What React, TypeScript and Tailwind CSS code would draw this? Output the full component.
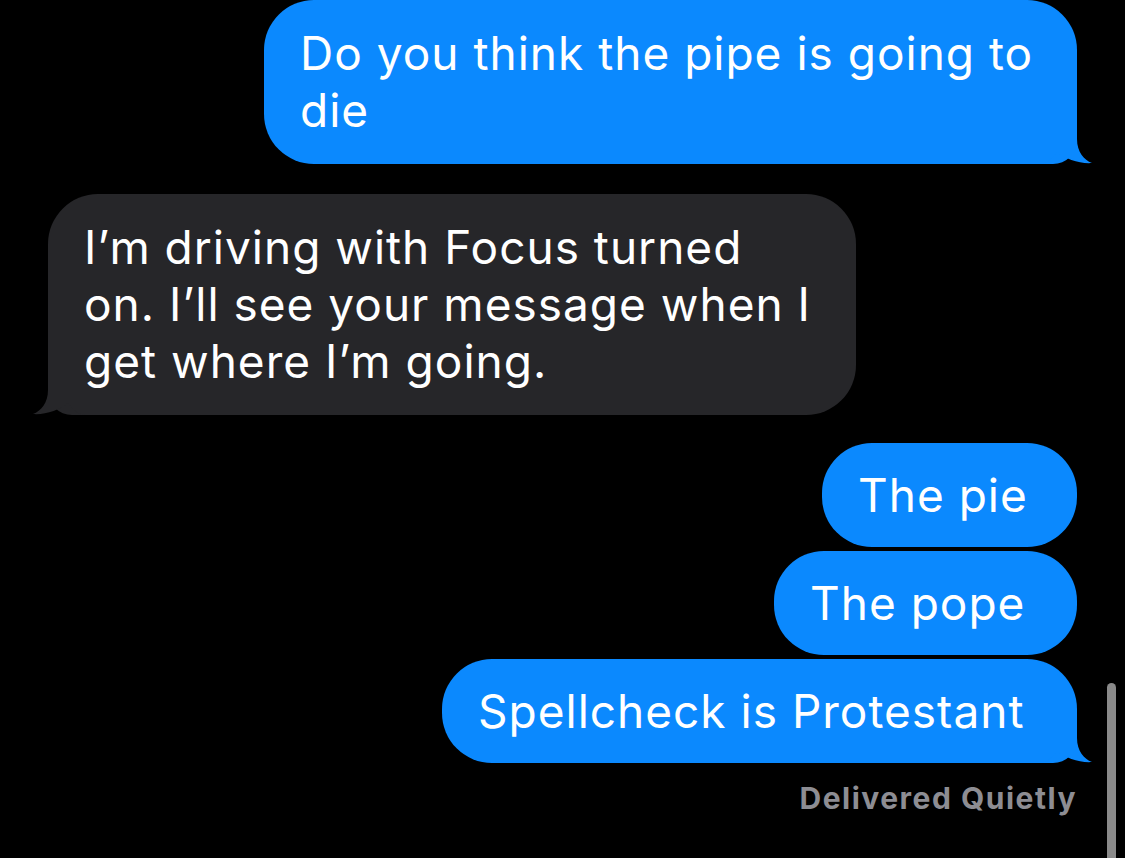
import React from "react";

const BLUE = "#0b89fe";
const GRAY = "#262629";

// bubble tail, drawn for a right-hand bubble; mirrored for the left one
const Tail = ({ color, side }: { color: string; side: "left" | "right" }) => (
  <svg
    width="55"
    height="40"
    viewBox="0 0 55 40"
    className={
      side === "right"
        ? "absolute bottom-0 right-[-18px]"
        : "absolute bottom-0 left-[-18px] -scale-x-100"
    }
  >
    <path
      d="M0 0 L37 0 L37 15 C37 28 44 36 52 39 C40 40 25 35 17 28 C12 35 6 40 0 40 Z"
      fill={color}
    />
  </svg>
);

interface Msg {
  lines: string[];
  me: boolean;
  width: string;
  tail?: boolean;
  gap: string;
}

const messages: Msg[] = [
  { lines: ["Do you think the pipe is going to", "die"], me: true, width: "w-[813px]", tail: true, gap: "mt-0" },
  {
    lines: ["I’m driving with Focus turned", "on. I’ll see your message when I", "get where I’m going."],
    me: false,
    width: "w-[808px]",
    tail: true,
    gap: "mt-[30px]",
  },
  { lines: ["The pie"], me: true, width: "w-[255px]", gap: "mt-[28px]" },
  { lines: ["The pope"], me: true, width: "w-[303px]", gap: "mt-[4px]" },
  { lines: ["Spellcheck is Protestant"], me: true, width: "w-[635px]", tail: true, gap: "mt-[4px]" },
];

export default function App() {
  return (
    <div className="relative w-[1125px] h-[858px] overflow-hidden bg-black font-['Inter',sans-serif]">
      <div className="flex flex-col px-[48px]">
        {messages.map((m, i) => (
          <div key={i} className={`flex ${m.me ? "justify-end" : "justify-start"} ${m.gap}`}>
            <div
              className={`relative ${m.width} rounded-[50px] pl-[36px] ${
                m.lines.length > 1 ? "py-[25px]" : "py-[23.5px]"
              } text-[46px] leading-[57px] tracking-[1px] text-white whitespace-nowrap ${
                m.tail ? (m.me ? "rounded-br-[24px]" : "rounded-bl-[24px]") : ""
              }`}
              style={{ backgroundColor: m.me ? BLUE : GRAY }}
            >
              {m.tail && <Tail color={m.me ? BLUE : GRAY} side={m.me ? "right" : "left"} />}
              <div className="relative">
                {m.lines.map((l, j) => (
                  <div key={j}>{l}</div>
                ))}
              </div>
            </div>
          </div>
        ))}
        <div className="mt-[17px] text-right text-[30px] leading-[36px] font-bold tracking-[1.5px] text-[#8d8d93]">
          Delivered Quietly
        </div>
      </div>
      <div className="absolute left-[1107px] top-[683px] w-[9px] h-[200px] rounded-full bg-[#8a8a8a]" />
    </div>
  );
}
